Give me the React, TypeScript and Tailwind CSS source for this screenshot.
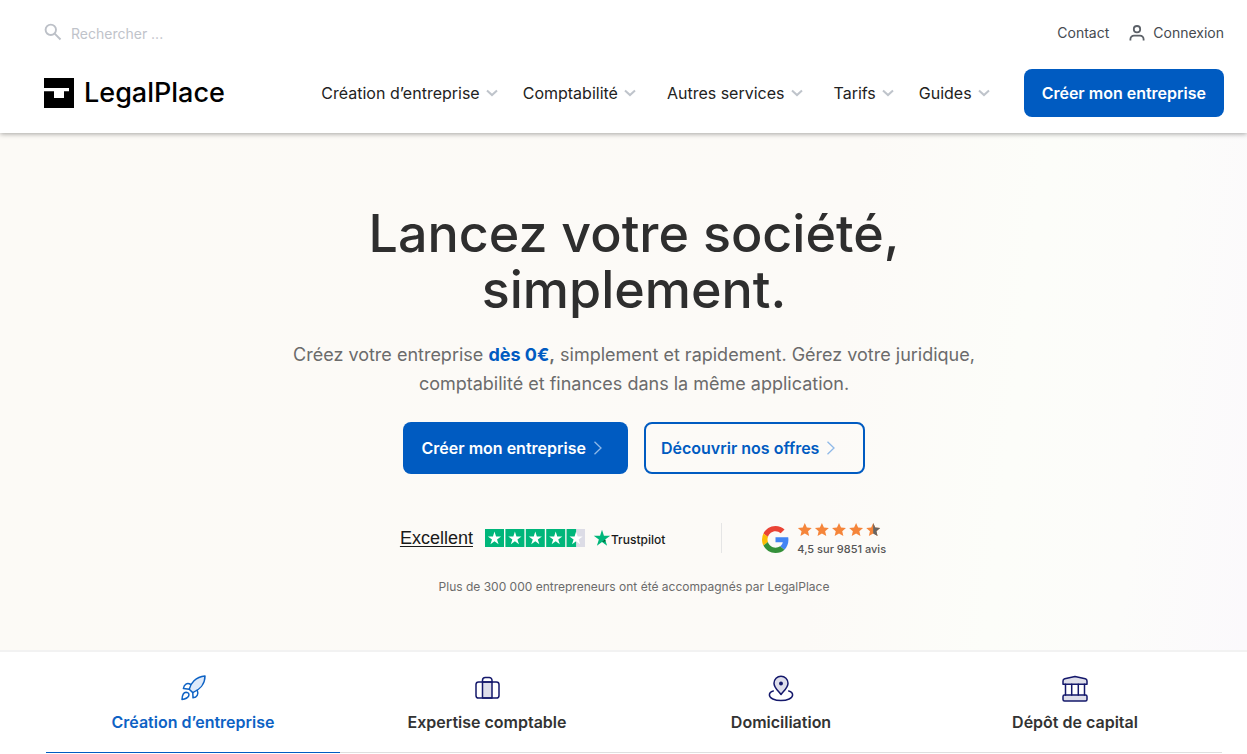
import type { ReactNode } from "react";

const STAR = "M12 1.5l3.1 7 7.6.7-5.7 5 1.7 7.5L12 17.8l-6.7 3.9L7 14.2l-5.7-5 7.6-.7z";
const SHARP_STAR = "M12 1l2.6 8.1H23l-6.8 5 2.6 8.1L12 17.2l-6.8 5 2.6-8.1-6.8-5h8.4z";

function ChevronDown() {
  return (
    <svg className="h-3 w-3" viewBox="0 0 12 12" fill="none" stroke="#bfc4cb" strokeWidth="2" aria-hidden="true">
      <path d="M1 3.5l5 4.6 5-4.6" />
    </svg>
  );
}

function ChevronRight() {
  return (
    <svg className="h-[14px] w-[10px] text-[#8fb9e8]" viewBox="0 0 10 14" fill="none" stroke="currentColor" strokeWidth="1.3" aria-hidden="true">
      <path d="M1.5 .7L8 7l-6.5 6.3" />
    </svg>
  );
}

function NavItem({ label, className = "" }: { label: string; className?: string }) {
  return (
    <li className={className}>
      <button type="button" className="flex items-center gap-[6px] whitespace-nowrap">
        {label}
        <ChevronDown />
      </button>
    </li>
  );
}

function Logo() {
  return (
    <a href="#" className="flex items-center gap-[10px] text-black">
      <svg className="h-[30px] w-[30px]" viewBox="0 0 30 30" aria-hidden="true">
        <path d="M0 0h30v30H0z" fill="#000" />
        <path d="M0 10h25v3.2h-5V20H10v-6.8H0z" fill="#fff" />
      </svg>
      <span className="text-[27px] leading-[30px] font-medium">LegalPlace</span>
    </a>
  );
}

function Header() {
  return (
    <header className="relative z-10 bg-white pr-[23px] pb-4 pl-11 shadow-[0_1px_5px_rgba(0,0,0,0.35)]">
      <div className="flex h-[69px] items-center justify-between text-sm text-[#454a50]">
        <label className="mb-[5px] flex items-center gap-[9px]">
          <svg className="h-[18px] w-[18px]" viewBox="0 0 18 18" fill="none" stroke="#bcc0c7" strokeWidth="1.9" aria-hidden="true">
            <circle cx="6.8" cy="6.8" r="5.2" />
            <path d="M10.7 10.7l5.8 5.8" />
          </svg>
          <input
            type="search"
            aria-label="Rechercher"
            placeholder="Rechercher ..."
            className="w-40 bg-transparent pt-[3px] outline-none placeholder:text-[#bfc3ca]"
          />
        </label>
        <div className="mb-[3px] flex items-center gap-5">
          <a href="#">Contact</a>
          <a href="#" className="flex items-center gap-2">
            <svg className="h-4 w-4" viewBox="0 0 16 16" fill="none" stroke="#5b6067" strokeWidth="1.8" aria-hidden="true">
              <circle cx="8" cy="4.2" r="3.2" />
              <path d="M1.4 15.6v-1.4a3.6 3.6 0 0 1 3.6-3.6h6a3.6 3.6 0 0 1 3.6 3.6v1.4" />
            </svg>
            Connexion
          </a>
        </div>
      </div>
      <div className="flex items-center justify-between">
        <Logo />
        <nav className="flex items-center gap-[34px]">
          <ul className="flex items-center gap-[25px] text-base text-[#222]">
            <NavItem label="Création d’entreprise" />
            <NavItem label="Comptabilité" />
            <NavItem label="Autres services" className="mx-[6px]" />
            <NavItem label="Tarifs" />
            <NavItem label="Guides" />
          </ul>
          <a
            href="#"
            className="flex h-12 items-center rounded-lg bg-[#005bc1] px-[18px] text-base font-semibold whitespace-nowrap text-white"
          >
            Créer mon entreprise
          </a>
        </nav>
      </div>
    </header>
  );
}

function TrustpilotRating() {
  return (
    <a href="#" className="flex items-center" aria-label="Trustpilot">
      <span className="mr-3 font-['Liberation_Sans',sans-serif] text-lg leading-6 text-[#191919] underline underline-offset-2">
        Excellent
      </span>
      <svg className="mr-2 h-[18px] w-[100px]" viewBox="0 0 100 18" aria-hidden="true">
        {[0, 1, 2, 3, 4].map((i) => (
          <g key={i} transform={`translate(${i * 20.4} 0)`}>
            <path d="M0 0h19v18H0z" fill={i === 4 ? "#dcdce6" : "#00b67a"} />
            {i === 4 && <path d="M0 0h9.5v18H0z" fill="#00b67a" />}
            <path d={SHARP_STAR} fill="#fff" transform="translate(2.3 2) scale(.6)" />
          </g>
        ))}
      </svg>
      <svg className="h-[18px] w-[18px]" viewBox="0 0 24 24" aria-hidden="true">
        <path d={SHARP_STAR} fill="#00b67a" />
        <path d="M16.2 14.1l.7 2.1-4.9 1z" fill="#005128" />
      </svg>
      <span className="mt-1 text-xs leading-4 font-medium text-[#191919]">Trustpilot</span>
    </a>
  );
}

function GoogleRating() {
  return (
    <div className="flex items-center gap-2 pt-[3px]">
      <svg className="h-[27px] w-[27px]" viewBox="0 0 48 48" role="img" aria-label="Google">
        <path fill="#ea4335" d="M24 9.5c3.54 0 6.71 1.22 9.21 3.6l6.85-6.85C35.9 2.38 30.47 0 24 0 14.62 0 6.51 5.38 2.56 13.22l7.98 6.19C12.43 13.72 17.74 9.5 24 9.5z" />
        <path fill="#4285f4" d="M46.98 24.55c0-1.57-.15-3.09-.38-4.55H24v9.02h12.94c-.58 2.96-2.26 5.48-4.78 7.18l7.73 6c4.51-4.18 7.09-10.36 7.09-17.65z" />
        <path fill="#fbbc05" d="M10.53 28.59A14.5 14.5 0 0 1 9.77 24c0-1.6.27-3.14.76-4.59l-7.98-6.19A23.9 23.9 0 0 0 0 24c0 3.88.92 7.54 2.56 10.78l7.97-6.19z" />
        <path fill="#34903a" d="M24 48c6.48 0 11.93-2.13 15.89-5.81l-7.73-6c-2.15 1.45-4.92 2.3-8.16 2.3-6.26 0-11.57-4.22-13.47-9.91l-7.98 6.19C6.51 42.62 14.62 48 24 48z" />
      </svg>
      <div>
        <svg className="h-[15px] w-[84px]" viewBox="0 0 84 15" aria-hidden="true">
          {[0, 1, 2, 3, 4].map((i) => (
            <path key={i} d={STAR} fill="#f5853a" transform={`translate(${i * 17.1} 0) scale(.65)`} />
          ))}
          <path
            d="M12 1.5l3.1 7 7.6.7-5.7 5 1.7 7.5L12 17.8z"
            fill="#666"
            transform="translate(68.4 0) scale(.65)"
          />
        </svg>
        <p className="mt-1 text-[11px] leading-4 font-medium text-[#555]">4,5 sur 9851 avis</p>
      </div>
    </div>
  );
}

function Hero() {
  return (
    <section className="border-b-2 border-[#f2f2f2] bg-[linear-gradient(97deg,#fcfaf6_0%,#fcfaf7_66%,#fcfdf9_80%,#fcfcfa_90%,#fbf9fc_100%)] pr-[23px] pl-11 text-center">
      <div className="flex flex-col items-center pt-[73px] pb-[53px]">
        <h1 className="text-[52px] leading-[56px] font-medium text-[#2e2e2e]">
          Lancez votre société,
          <br />
          simplement.
        </h1>
        <p className="mt-[22px] max-w-[700px] text-lg leading-[29px] text-[#6b6b6b]">
          Créez votre entreprise <strong className="font-bold text-[#005bc1]">dès 0€</strong>
          <strong className="font-semibold">,</strong> simplement et rapidement. Gérez votre juridique, comptabilité et
          finances dans la même application.
        </p>
        <div className="mt-6 flex gap-4 text-base font-semibold">
          <a href="#" className="flex h-[52px] items-center gap-[7px] rounded-lg bg-[#005bc1] pr-[25px] pl-[19px] text-white">
            Créer mon entreprise
            <ChevronRight />
          </a>
          <a href="#" className="flex h-[52px] items-center gap-[7px] rounded-lg border-2 border-[#005bc1] pr-[27px] pl-[15px] text-[#005bc1]">
            Découvrir nos offres
            <ChevronRight />
          </a>
        </div>
        <div className="mt-[45px] flex items-center pl-[18px]">
          <TrustpilotRating />
          <span className="mr-10 ml-14 h-[30px] w-px bg-[#e5e5e5]" />
          <GoogleRating />
        </div>
        <p className="mt-5 text-xs leading-5 text-[#6b6b6b]">
          Plus de 300 000 entrepreneurs ont été accompagnés par LegalPlace
        </p>
      </div>
    </section>
  );
}

function RocketIcon() {
  return (
    <>
      <path d="M10.2 15.3C11.5 9.5 16.500 2.9 26 2c0 8.2-5.600 14-12.2 16.6z" fill="#dfeafa" />
      <path d="M11.7 10.5c-3.6-2.2-6.7 0-7.3 4.1l5.8.7M18.2 16.3c1.8 4-.3 7-4.2 7.5l-.2-5.2M3 25.5c.2-3.8 1.1-7.2 4.1-7.3 2.3 0 3.5 2 2.5 4-1 2-3.5 2.9-6.6 3.3z" />
    </>
  );
}

function SuitcaseIcon() {
  return (
    <>
      <path d="M9.5 8h9.5v16H9.5z" fill="#dedeea" />
      <rect x="3" y="8" width="23" height="16" rx="2.6" />
      <path d="M9.5 8V6.3A2.8 2.8 0 0 1 12.3 3.5h3.9A2.8 2.8 0 0 1 19 6.3V8" />
    </>
  );
}

function PinIcon() {
  return (
    <>
      <path d="M14 20.5c-2.5-3.5-7-6.7-7-11.3a7 7 0 0 1 14 0c0 4.6-4.5 7.8-7 11.3z" fill="#dedeea" />
      <circle cx="14" cy="9.5" r="1.2" fill="#14186b" />
      <path d="M6.3 17C3.7 17.7 2.4 19.3 2.4 21c0 3.2 5.2 5.6 11.6 5.6S25.6 24.2 25.6 21c0-1.7-1.3-3.3-3.9-4" />
    </>
  );
}

function BankIcon() {
  return (
    <>
      <path d="M2 10.3V6.9c0-1.1.6-1.8 1.7-2.1L14 2.6l10.300 2.2c1.1.3 1.7 1 1.7 2.1v3.4z" fill="#dedeea" />
      <rect x="2" y="21" width="24" height="6" rx="1.5" fill="#dedeea" />
      <path d="M4.500 10.300v10.700M10.700 10.300v10.700M17.300 10.300v10.700M23.500 10.300v10.700" />
    </>
  );
}

function Tab({ label, icon, active = false }: { label: string; icon: ReactNode; active?: boolean }) {
  return (
    <button
      type="button"
      role="tab"
      aria-selected={active}
      className={
        active
          ? "flex flex-1 flex-col items-center border-b border-[#005bc1] pt-[22px] pb-[18px] text-[#0d62c4]"
          : "flex flex-1 flex-col items-center border-b border-[#dfdfdf] pt-[22px] pb-[18px] text-[#333]"
      }
    >
      <svg
        className="h-7 w-7"
        viewBox="0 0 28 28"
        fill="none"
        stroke={active ? "#0d62c4" : "#14186b"}
        strokeWidth="1.5"
        strokeLinejoin="round"
        strokeLinecap="round"
        aria-hidden="true"
      >
        {icon}
      </svg>
      <span className="mt-2 text-base leading-6 font-semibold">{label}</span>
    </button>
  );
}

export default function App() {
  return (
    <div className="bg-white font-['Inter',sans-serif]">
      <Header />
      <main>
        <Hero />
        <div role="tablist" className="mr-[25px] ml-[46px] flex">
          <Tab label="Création d’entreprise" icon={<RocketIcon />} active />
          <Tab label="Expertise comptable" icon={<SuitcaseIcon />} />
          <Tab label="Domiciliation" icon={<PinIcon />} />
          <Tab label="Dépôt de capital" icon={<BankIcon />} />
        </div>
      </main>
    </div>
  );
}
